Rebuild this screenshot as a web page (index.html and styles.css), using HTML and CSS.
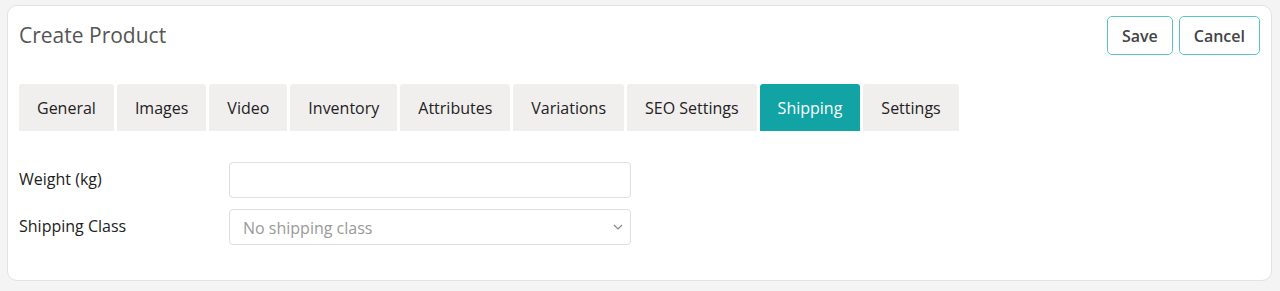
FILE: index.html
```html
<!DOCTYPE html>
<html lang="en">
<head>
    <meta charset="UTF-8">
    <title>Create Product</title>
    <link rel="stylesheet" href="styles.css">
</head>
<body>

<div class="card">
    <div class="card-head">
        <h2>Create Product</h2>
        <div class="actions">
            <button class="btn">Save</button>
            <button class="btn">Cancel</button>
        </div>
    </div>

    <div class="tabs">
        <button class="tab">General</button>
        <button class="tab">Images</button>
        <button class="tab">Video</button>
        <button class="tab">Inventory</button>
        <button class="tab">Attributes</button>
        <button class="tab">Variations</button>
        <button class="tab">SEO Settings</button>
        <button class="tab active">Shipping</button>
        <button class="tab">Settings</button>
    </div>

    <div class="form">
        <div class="row">
            <label>Weight (kg)</label>
            <input type="text" class="field">
        </div>
        <div class="row">
            <label>Shipping Class</label>
            <div class="select-wrap">
                <select class="field">
                    <option>No shipping class</option>
                </select>
                <svg class="caret" width="10" height="6" viewBox="0 0 10 6"><path d="M1 1l4 4 4-4" fill="none" stroke="#888" stroke-width="1.2"/></svg>
            </div>
        </div>
    </div>
</div>

</body>
</html>
```

FILE: styles.css
```css
body {
    margin: 0;
    padding: 5px 8px 11px 7px;
    background: #f4f4f4;
    font-family: 'Open Sans', sans-serif;
    color: #222;
}

.card {
    background: white;
    border: 1px solid #e2e2e2;
    border-radius: 10px;
    padding: 10px 11px 32px 11px;
    height: 232px;
}

.card-head {
    display: flex;
    justify-content: space-between;
    align-items: center;
}

h2 {
    margin: 0;
    font-size: 21px;
    font-weight: 400;
    color: #555;
    padding-bottom: 1px;
}

.actions {
    display: flex;
    gap: 6px;
}

.btn {
    height: 39px;
    padding: 0 14px;
    background: white;
    border: 1px solid #5bc5c5;
    border-radius: 5px;
    font-family: 'Open Sans', sans-serif;
    font-size: 16px;
    font-weight: 600;
    color: #444;
    cursor: pointer;
}

.tabs {
    display: flex;
    gap: 3px;
    margin-top: 29px;
}

.tab {
    height: 47px;
    padding: 0 18px;
    background: #f1eeee;
    border: none;
    border-radius: 3px 3px 0 0;
    font-family: 'Open Sans', sans-serif;
    font-size: 16px;
    color: #222;
    cursor: pointer;
}

.tab.active {
    background: #12a4a4;
    color: white;
}

.form {
    margin-top: 31px;
    display: flex;
    flex-direction: column;
    gap: 11px;
}

.row {
    display: flex;
    align-items: center;
}

label {
    width: 210px;
    font-size: 16px;
    font-weight: 500;
    color: #222;
    padding-bottom: 3px;
}

.field {
    box-sizing: border-box;
    width: 402px;
    height: 36px;
    border: 1px solid #dedede;
    border-radius: 4px;
    background: white;
    font-family: 'Open Sans', sans-serif;
    font-size: 16px;
    padding: 0 13px;
}

.select-wrap {
    position: relative;
}

select.field {
    appearance: none;
    color: #999;
    padding-top: 2px;
}

.caret {
    position: absolute;
    right: 8px;
    top: 15px;
}
```
